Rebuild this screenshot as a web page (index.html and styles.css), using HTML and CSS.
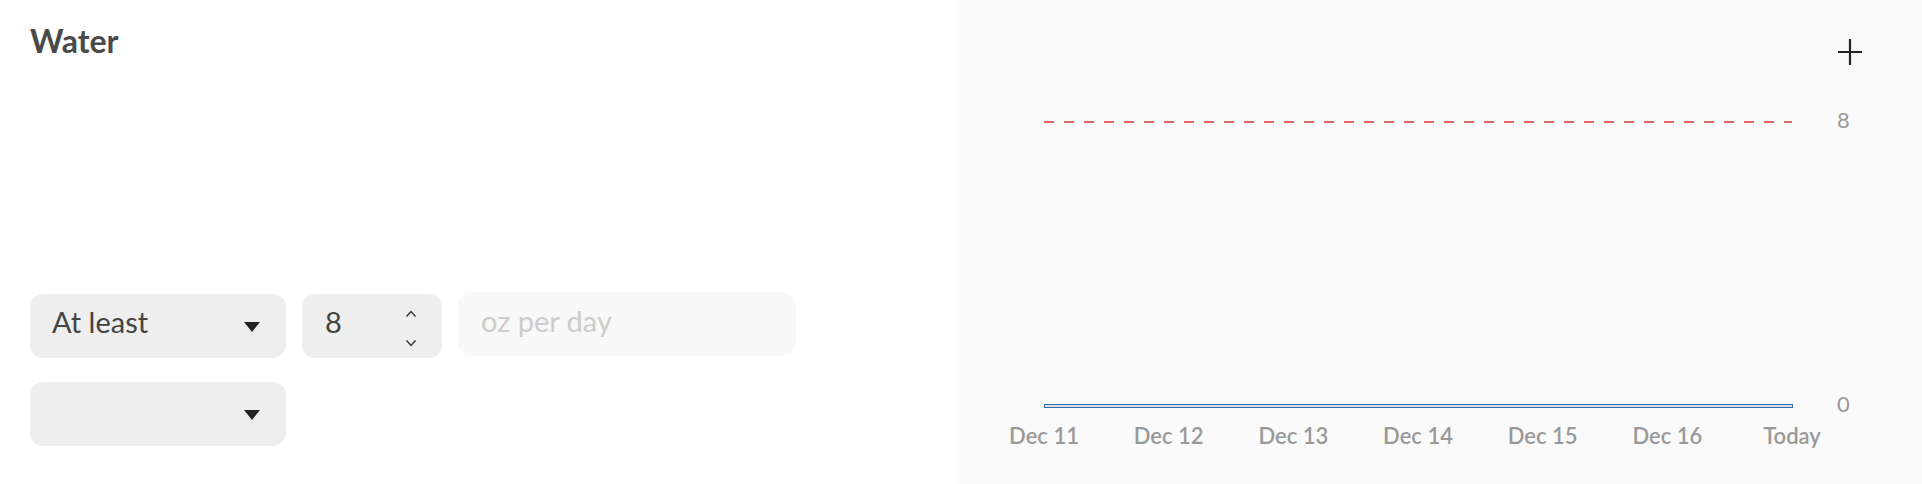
FILE: index.html
```html
<!DOCTYPE html>
<html lang="en">
<head>
  <meta charset="UTF-8">
  <meta name="viewport" content="width=device-width, initial-scale=1.0">
  <title>Water</title>
  <link rel="stylesheet" href="styles.css">
</head>
<body>
  <div class="goal-page">
    <div class="goal-editor">
      <h1 class="goal-title">Water</h1>
      <form class="goal-form">
        <div class="goal-row">
          <div class="select-box select-wide">
            <span class="box-text">At least</span>
            <svg class="caret" width="16" height="10" viewBox="0 0 16 10"><path d="M0 0h16L8 10z" fill="#222"/></svg>
          </div>
          <div class="number-box">
            <span class="box-text">8</span>
            <svg class="spinner" width="12" height="40" viewBox="0 0 12 40"><path d="M1.5 8.5L6 3.5l4.5 5M1.5 32.5L6 37.5l4.5-5" fill="none" stroke="#333" stroke-width="1.4"/></svg>
          </div>
          <input class="unit-input" type="text" placeholder="oz per day">
        </div>
        <div class="goal-row">
          <div class="select-box select-wide">
            <span class="box-text"></span>
            <svg class="caret" width="16" height="10" viewBox="0 0 16 10"><path d="M0 0h16L8 10z" fill="#222"/></svg>
          </div>
        </div>
      </form>
    </div>

    <div class="goal-chart">
      <button class="add-btn" type="button" aria-label="Add">
        <svg width="24" height="26" viewBox="0 0 24 26"><path d="M12 0v26M0 13h24" stroke="#222" stroke-width="2.2"/></svg>
      </button>
      <svg class="chart" width="966" height="484" viewBox="0 0 966 484">
        <line x1="88" y1="122" x2="836" y2="122" stroke="#e06464" stroke-width="2.2" stroke-dasharray="10 10"/>
        <text class="axis-label" x="881" y="128">8</text>
        <rect x="88.5" y="404.5" width="748" height="3" fill="#dedede" stroke="#2f6fb5" stroke-width="1"/>
        <text class="axis-label" x="881" y="412">0</text>
        <g class="date-labels" text-anchor="middle">
          <text x="88" y="444">Dec 11</text>
          <text x="212.7" y="444">Dec 12</text>
          <text x="337.3" y="444">Dec 13</text>
          <text x="462" y="444">Dec 14</text>
          <text x="586.7" y="444">Dec 15</text>
          <text x="711.3" y="444">Dec 16</text>
          <text x="836" y="444">Today</text>
        </g>
      </svg>
    </div>
  </div>
</body>
</html>
```

FILE: styles.css
```css
body {
    margin: 0;
    font-family: Lato, "Noto Sans", sans-serif;
    background-color: #fff;
}
.goal-page {
    display: flex;
    height: 484px;
}
.goal-editor {
    width: 956px;
    box-sizing: border-box;
    padding: 22px 30px 38px;
    display: flex;
    flex-direction: column;
}
.goal-title {
    margin: 0;
    font-size: 32px;
    font-weight: 700;
    color: #4a4a4a;
    line-height: 38px;
}
.goal-form {
    margin-top: auto;
    display: flex;
    flex-direction: column;
    gap: 24px;
}
.goal-row {
    display: flex;
    gap: 16px;
}
.select-box,
.number-box {
    height: 64px;
    box-sizing: border-box;
    border-radius: 13px;
    background-color: #eeeeee;
    display: flex;
    align-items: center;
    justify-content: space-between;
    font-size: 29px;
    color: #444;
}
.box-text {
    margin-bottom: 9px;
}
.select-wide {
    width: 256px;
    padding: 0 26px 0 22px;
}
.select-box .caret {
    margin-top: 2px;
}
.number-box {
    width: 140px;
    padding: 0 25px 0 23px;
}
.number-box .spinner {
    margin-top: 4px;
}
.unit-input {
    width: 338px;
    height: 64px;
    margin-top: -2px;
    box-sizing: border-box;
    border: none;
    border-radius: 13px;
    background-color: #f8f8f8;
    padding: 0 23px 8px;
    font-family: inherit;
    font-size: 29px;
    color: #444;
    outline: none;
}
.unit-input::placeholder {
    color: #cccccc;
}
.goal-chart {
    flex: 1;
    position: relative;
    background-color: #fafafa;
}
.chart {
    display: block;
}
.add-btn {
    position: absolute;
    top: 39px;
    right: 60px;
    padding: 0;
    border: none;
    background: none;
    cursor: pointer;
    line-height: 0;
}
.axis-label,
.date-labels text {
    font-family: Lato, "Noto Sans", sans-serif;
    font-size: 22px;
    fill: #999;
}
.date-labels text {
    font-weight: 600;
}
```
